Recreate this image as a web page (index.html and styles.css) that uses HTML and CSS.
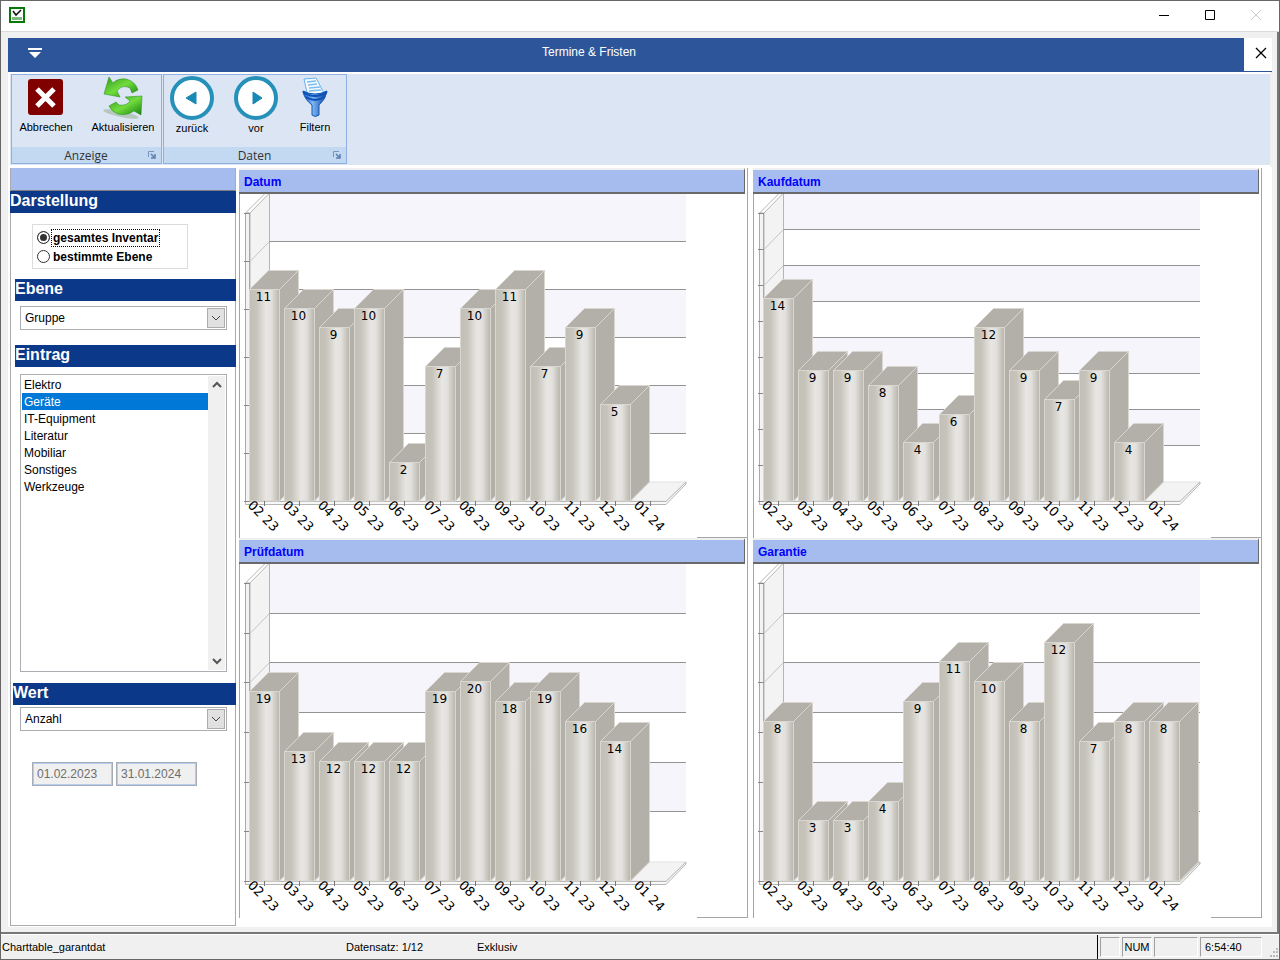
FILE: index.html
```html
<!DOCTYPE html>
<html lang="de">

<head>
    <meta charset="UTF-8">
    <meta name="viewport" content="width=device-width, initial-scale=1.0">
    <title>Termine &amp; Fristen</title>
    <link rel="stylesheet" href="styles.css">
</head>

<body>
    <div class="window">
        <!-- Window title bar -->
        <header class="titlebar">
            <svg class="app-icon" width="16" height="16" viewBox="0 0 16 16">
                <rect x="1" y="1" width="14" height="14" fill="#fff" stroke="#067a06" stroke-width="2" />
                <path d="M4 4l3 4 5-5" fill="none" stroke="#111" stroke-width="1.5" />
                <path d="M3 11.5h10" stroke="#7dbb7d" stroke-width="3" />
            </svg>
            <div class="window-buttons">
                <button aria-label="Minimieren"><svg width="12" height="12"><path d="M1 6.5h10" stroke="#000" /></svg></button>
                <button aria-label="Maximieren"><svg width="12" height="12"><path d="M1.500 1.500h9v9h-9z" fill="none" stroke="#000" /></svg></button>
                <button aria-label="Schließen" disabled><svg width="12" height="12"><path d="M1 1l10 10M11 1L1 11" stroke="#ccc" /></svg></button>
            </div>
        </header>

        <div class="frame">
            <!-- Blue form header -->
            <div class="form-header">
                <button class="menu-button" aria-label="Menü">
                    <svg width="14" height="10"><path d="M0 0h14v2H0zM1 4h12L7 10z" fill="#fff" /></svg>
                </button>
                <h1>Termine &amp; Fristen</h1>
                <button class="close-button" aria-label="Formular schließen">
                    <svg width="12" height="12"><path d="M1 1l10 10M11 1L1 11" stroke="#000" stroke-width="1.3" /></svg>
                </button>
            </div>

            <!-- Ribbon -->
            <div class="ribbon">
                <div class="ribbon-group">
                    <div class="ribbon-items view-items">
                        <button class="cancel">
                            <svg width="44" height="44" viewBox="0 0 44 44">
                                <rect x="4" y="4" width="35" height="36" rx="3" fill="#800000" />
                                <path d="M13 14l17 17M30 14L13 31" stroke="#fff" stroke-width="5" />
                            </svg>
                            Abbrechen
                        </button>
                        <button class="refresh">
                            <svg width="44" height="44" viewBox="0 0 44 44">
                                <defs>
                                    <linearGradient id="green" x1="0" y1="0" x2="1" y2="1">
                                        <stop offset="0" stop-color="#2f9a1c" />
                                        <stop offset="0.5" stop-color="#72dc3c" />
                                        <stop offset="1" stop-color="#128010" />
                                    </linearGradient>
                                </defs>
                                <ellipse cx="20" cy="39" rx="18" ry="3" fill="#b5c8bd" transform="rotate(12 20 39)" />
                                <path d="M8 2L3 19L19 22L16 16Q21 9 29 13L31 18L37 15Q34 6 25 4Q17 3 12 8Z" fill="url(#green)" stroke="#218a18" stroke-width="0.5" />
                                <path d="M41 21L24 22L29 26Q26 31 18 30L15 27L8 31Q10 36 17 39Q26 41 33 36L40 40Z" fill="url(#green)" stroke="#218a18" stroke-width="0.5" />
                            </svg>
                            Aktualisieren
                        </button>
                    </div>
                    <div class="ribbon-label">
                        <span>Anzeige</span>
                        <svg width="8" height="8"><path d="M0.500 6V0.500H6" fill="none" stroke="#7795bd" /><path d="M3 3l3 3M7 3v4H3" fill="none" stroke="#5c7fae" stroke-width="1.5" /></svg>
                    </div>
                </div>
                <div class="ribbon-group">
                    <div class="ribbon-items data-items">
                        <button class="nav">
                            <svg width="44" height="44" viewBox="0 0 44 44">
                                <circle cx="22" cy="22" r="20" fill="#fff" stroke="#2590b8" stroke-width="4" />
                                <path d="M16 22L26 16V28Z" fill="#1889b5" stroke="#1889b5" stroke-linejoin="round" />
                            </svg>
                            zurück
                        </button>
                        <button class="nav">
                            <svg width="44" height="44" viewBox="0 0 44 44">
                                <circle cx="22" cy="22" r="20" fill="#fff" stroke="#2590b8" stroke-width="4" />
                                <path d="M28 22L19 16V28Z" fill="#1889b5" stroke="#1889b5" stroke-linejoin="round" />
                            </svg>
                            vor
                        </button>
                        <button class="filter">
                            <svg width="44" height="44" viewBox="0 0 44 44">
                                <defs>
                                    <linearGradient id="blue">
                                        <stop offset="0" stop-color="#1050b8" />
                                        <stop offset="0.4" stop-color="#7db8f2" />
                                        <stop offset="1" stop-color="#073a9a" />
                                    </linearGradient>
                                </defs>
                                <path d="M11 4L23 3L32 20L15 22Z" fill="#f4faff" stroke="#65b2ee" />
                                <path d="M14 7l9-1M15 10l9-1M16 13l11-1M16 16l12-1" stroke="#7cbdf0" stroke-width="1.5" />
                                <path d="M10 16Q22 22 34 16Q33 24 26 30V40Q22 43 19 40V30Q11 24 10 16Z" fill="url(#blue)" stroke="#1459b4" />
                                <path d="M10 17Q22 25 34 17M13 22Q22 28 31 22" fill="none" stroke="#0c51ba" stroke-width="2" />
                            </svg>
                            Filtern
                        </button>
                    </div>
                    <div class="ribbon-label">
                        <span>Daten</span>
                        <svg width="8" height="8"><path d="M0.500 6V0.500H6" fill="none" stroke="#7795bd" /><path d="M3 3l3 3M7 3v4H3" fill="none" stroke="#5c7fae" stroke-width="1.5" /></svg>
                    </div>
                </div>
            </div>

            <div class="content">
                <!-- Filter settings -->
                <aside class="sidebar">
                    <div class="sidebar-top"></div>
                    <h2>Darstellung</h2>
                    <div class="radio-box">
                        <label><input type="radio" name="scope" checked><span class="focused">gesamtes Inventar</span></label>
                        <label><input type="radio" name="scope"><span>bestimmte Ebene</span></label>
                    </div>

                    <h2 class="inset" id="level-label">Ebene</h2>
                    <div class="dropdown">
                        <select aria-labelledby="level-label">
                            <option>Gruppe</option>
                        </select>
                        <svg width="18" height="20"><rect x="0.500" y="0.500" width="17" height="19" fill="#e1e1e1" stroke="#adadad" /><path d="M5 8l4 4 4-4" fill="none" stroke="#444" /></svg>
                    </div>

                    <h2 class="inset entry-title" id="entry-label">Eintrag</h2>
                    <div class="listbox">
                        <select size="7" aria-labelledby="entry-label">
                            <option>Elektro</option>
                            <option selected>Geräte</option>
                            <option>IT-Equipment</option>
                            <option>Literatur</option>
                            <option>Mobiliar</option>
                            <option>Sonstiges</option>
                            <option>Werkzeuge</option>
                        </select>
                        <div class="scrollbar">
                            <svg width="10" height="8"><path d="M1 6l4-4 4 4" fill="none" stroke="#555" stroke-width="2" /></svg>
                            <svg width="10" height="8"><path d="M1 2l4 4 4-4" fill="none" stroke="#555" stroke-width="2" /></svg>
                        </div>
                    </div>

                    <h2 class="value-title" id="value-label">Wert</h2>
                    <div class="dropdown value-dropdown">
                        <select aria-labelledby="value-label">
                            <option>Anzahl</option>
                        </select>
                        <svg width="18" height="20"><rect x="0.500" y="0.500" width="17" height="19" fill="#e1e1e1" stroke="#adadad" /><path d="M5 8l4 4 4-4" fill="none" stroke="#444" /></svg>
                    </div>

                    <div class="dates">
                        <input type="text" value="01.02.2023" aria-label="Von" disabled>
                        <input type="text" value="31.01.2024" aria-label="Bis" disabled>
                    </div>
                </aside>

                <!-- Charts are filled in by charts.js -->
                <main class="panels">
                    <section class="panel">
                        <h3>Datum</h3>
                        <div class="chart" id="chart-datum"></div>
                    </section>
                    <section class="panel">
                        <h3>Kaufdatum</h3>
                        <div class="chart" id="chart-kaufdatum"></div>
                    </section>
                    <section class="panel">
                        <h3>Prüfdatum</h3>
                        <div class="chart" id="chart-pruefdatum"></div>
                    </section>
                    <section class="panel">
                        <h3>Garantie</h3>
                        <div class="chart" id="chart-garantie"></div>
                    </section>
                </main>
            </div>
        </div>

        <!-- Status bar -->
        <footer class="statusbar">
            <span class="status-table">Charttable_garantdat</span>
            <span class="status-record">Datensatz: 1/12</span>
            <span class="status-mode">Exklusiv</span>
            <div class="status-cells">
                <span class="cell cell-caps"></span>
                <span class="cell cell-num">NUM</span>
                <span class="cell cell-insert"></span>
                <span class="cell cell-time">6:54:40</span>
                <svg class="grip" width="10" height="10"><path d="M7 0h2v2H7zM4 3h2v2H4zM7 3h2v2H7zM1 7h2v2H1zM4 7h2v2H4zM7 7h2v2H7z" fill="#bbb" /></svg>
            </div>
        </footer>
    </div>

    <script src="charts.js"></script>
</body>

</html>
```

FILE: styles.css
```css
* {
    box-sizing: border-box;
}

body {
    margin: 0;
    font-family: "Liberation Sans", Arial, sans-serif;
    font-size: 12px;
    color: #000;
    background-color: #f0f0f0;
}

button {
    padding: 0;
    border: none;
    background: none;
    font-family: inherit;
    color: #000;
}

h1,
h2,
h3 {
    margin: 0;
}

svg {
    display: block;
}

.window {
    display: flex;
    flex-direction: column;
    min-height: 100vh;
    border: 1px solid #666;
}

/* Title bar */
.titlebar {
    display: flex;
    justify-content: space-between;
    align-items: center;
    height: 31px;
    padding: 0 17px 2px 8px;
    background-color: #fff;
    border-bottom: 1px solid #dcdcdc;
}

.window-buttons {
    display: flex;
    gap: 34px;
}

.window-buttons button {
    width: 12px;
    height: 12px;
}

.frame {
    flex: 1;
    display: flex;
    flex-direction: column;
    padding: 6px 5px 5px 7px;
    border-right: 2px solid #777;
    border-bottom: 2px solid #777;
}

/* Blue header of the form */
.form-header {
    display: flex;
    align-items: center;
    height: 34px;
    background-color: #2d569a;
}

.menu-button {
    width: 54px;
    padding: 0 20px 4px;
}

.form-header h1 {
    flex: 1;
    padding: 0 128px 6px 0;
    text-align: center;
    font-size: 12px;
    font-weight: normal;
    color: #fff;
}

.close-button {
    display: flex;
    justify-content: center;
    align-items: center;
    width: 28px;
    height: 33px;
    margin-bottom: 1px;
    padding: 0 0 3px 6px;
    background-color: #fff;
}

/* Ribbon */
.ribbon {
    display: flex;
    gap: 1px;
    height: 95px;
    padding-left: 1px;
    margin-right: 2px;
    background-color: #dbe5f4;
    border: 2px solid #fff;
    border-right: none;
}

.ribbon-group {
    display: flex;
    flex-direction: column;
    justify-content: space-between;
    height: 90px;
    border: 1px solid #8fb0e2;
}

.ribbon-items {
    display: flex;
}

.ribbon-items button {
    display: flex;
    flex-direction: column;
    align-items: center;
    padding-top: 1px;
    font-size: 11px;
    line-height: 16px;
}

.ribbon-items .cancel,
.ribbon-items .refresh,
.ribbon-items .filter {
    padding-top: 0;
}

.view-items {
    gap: 5px;
}

.data-items {
    gap: 8px;
    padding-right: 8px;
}

.ribbon-items .cancel {
    width: 68px;
}

.ribbon-items .refresh {
    width: 76px;
}

.ribbon-items .nav {
    width: 56px;
}

.ribbon-items .filter {
    width: 46px;
}

.ribbon-label {
    display: flex;
    align-items: center;
    height: 16px;
    padding: 0 5px 0 12px;
    font-family: "Open Sans", "Noto Sans", sans-serif;
    font-size: 12px;
    color: #333;
    background-color: #c3d9f1;
}

.ribbon-label span {
    flex: 1;
    text-align: center;
}

/* Main area */
.content {
    flex: 1;
    display: flex;
    gap: 3px;
    padding: 1px 10px 1px 2px;
    background-color: #fff;
}

.sidebar {
    width: 226px;
    border: 1px solid #a9abb0;
    border-top: none;
}

.sidebar-top {
    height: 23px;
    background-color: #a6bcee;
    border-bottom: 1px solid #7d7d7d;
}

.sidebar h2 {
    height: 22px;
    margin-right: -1px;
    margin-left: -1px;
    font-size: 16px;
    line-height: 19px;
    color: #fff;
    background-color: #0c3889;
}

.sidebar h2.inset {
    margin-left: 4px;
}

.sidebar h2.value-title {
    margin-left: 2px;
}

.radio-box {
    width: 156px;
    height: 45px;
    margin: 11px 0 10px 21px;
    padding: 3px 4px 0;
    border: 1px solid #dcdcdc;
}

.radio-box label {
    display: flex;
    align-items: center;
    height: 19px;
    font-weight: bold;
}

.radio-box input {
    appearance: none;
    width: 13px;
    height: 13px;
    margin: 0 3px 0 0;
    border: 1px solid #333;
    border-radius: 50%;
    background-color: #fff;
}

.radio-box input:checked {
    background-color: #333;
    box-shadow: inset 0 0 0 2px #fff;
}

.radio-box .focused {
    outline: 1px dotted #000;
    outline-offset: 1px;
}

.dropdown {
    display: flex;
    align-items: center;
    width: 207px;
    height: 24px;
    margin: 5px 0 0 9px;
    padding-right: 1px;
    border: 1px solid #abadb3;
}

.value-dropdown {
    margin-top: 2px;
}

select {
    appearance: none;
    flex: 1;
    padding: 0 0 0 4px;
    border: none;
    outline: none;
    font-family: inherit;
    font-size: 12px;
    color: #000;
    background-color: #fff;
}

.entry-title {
    margin-top: 15px;
}

.listbox {
    display: flex;
    width: 207px;
    height: 298px;
    margin: 7px 0 11px 9px;
    padding: 1px;
    border: 1px solid #abadb3;
}

.listbox select {
    height: 100%;
    padding: 0;
    overflow: hidden;
}

.listbox option {
    height: 17px;
    min-height: 17px;
    padding: 2px 2px 0;
    line-height: 15px;
}

.listbox option:checked {
    color: #fff;
    background: #0078d7 linear-gradient(#0078d7, #0078d7);
    -webkit-text-fill-color: #fff;
}

.scrollbar {
    display: flex;
    flex-direction: column;
    justify-content: space-between;
    align-items: center;
    width: 17px;
    padding: 5px 0;
    background-color: #f0f0f0;
}

.dates {
    display: flex;
    gap: 3px;
    margin: 31px 0 0 21px;
}

.dates input {
    width: 81px;
    height: 24px;
    padding: 0 4px;
    border: 1px solid #a7abb3;
    box-shadow: inset 0 0 0 1px #b4cdf0;
    font-family: inherit;
    font-size: 12px;
    color: #6d6d6d;
    background-color: #f0f0f0;
}

/* Chart panels */
.panels {
    flex: 1;
    display: grid;
    grid-template-columns: 1fr 1fr;
    column-gap: 5px;
    align-content: start;
}

.panel {
    border-right: 1px solid #a5a5a5;
}

.panel h3 {
    height: 26px;
    margin-right: 2px;
    padding-left: 5px;
    font-size: 12px;
    line-height: 24px;
    color: #00f;
    background-color: #a6bcee;
    border-top: 2px solid #f0f0f0;
    border-right: 1px solid #696969;
    border-bottom: 2px solid #696969;
}

.chart {
    border-left: 1px solid #a5a5a5;
    background: linear-gradient(#a5a5a5, #a5a5a5) right bottom / 50px 1px no-repeat;
}

.chart text {
    font-family: "DejaVu Sans", Verdana, sans-serif;
    font-size: 12px;
    fill: #000;
}

.chart .month {
    font-size: 13px;
}

/* Status bar */
.statusbar {
    display: flex;
    align-items: center;
    height: 25px;
    padding-left: 1px;
    font-size: 11px;
    background-color: #f0f0f0;
    border-top: 1px solid #fff;
}

.status-table {
    width: 344px;
}

.status-record {
    width: 131px;
}

.status-mode {
    flex: 1;
}

.status-cells {
    display: flex;
    align-items: center;
    gap: 2px;
    height: 24px;
    padding: 0 0 0 2px;
    border-left: 1px solid #000;
}

.cell {
    height: 20px;
    line-height: 19px;
    border: 1px solid #a0a0a0;
    border-right-color: #fff;
    border-bottom-color: #fff;
}

.cell-caps {
    width: 20px;
}

.cell-num {
    width: 30px;
    text-align: center;
}

.cell-insert {
    width: 44px;
}

.cell-time {
    width: 62px;
    padding-left: 4px;
}

.grip {
    align-self: flex-end;
    margin: 0 0 1px 5px;
}
```

FILE: charts.js
```javascript
const months = ['02 23', '03 23', '04 23', '05 23', '06 23', '07 23', '08 23', '09 23', '10 23', '11 23', '12 23', '01 24'];

// Chart geometry
const LEFT = 10;      // front left corner of the floor
const TOP = 19;       // upper end of the value axis
const DEPTH = 20;     // offset of the back wall
const BAR = 30;
const WIDTH = 416;
const STEP = 35.1;

function line(x1, y1, x2, y2, color) {
    return `<line x1="${x1}" y1="${y1}" x2="${x2}" y2="${y2}" stroke="${color}"/>`;
}

function shape(points, fill, stroke) {
    return `<polygon points="${points}" fill="${fill}" stroke="${stroke}"/>`;
}

function drawChart(id, values, max, steps, plotHeight) {
    const base = TOP + plotHeight;
    const back = LEFT + DEPTH - 0.5;
    const right = LEFT + DEPTH + WIDTH;
    let svg = '';

    // Back wall with alternating bands
    for (let i = 0; i < steps; i++) {
        const y = Math.round(TOP + plotHeight * i / steps);
        const next = Math.round(TOP + plotHeight * (i + 1) / steps);
        const wallY = y - DEPTH;
        if (i % 2 === 0) {
            svg += `<rect x="${back}" y="${wallY}" width="${right - back}" height="${next - y}" fill="#f5f5fb"/>`;
        }
    }

    // Left wall and floor
    svg += shape(`${LEFT},${TOP} ${back},${TOP - DEPTH} ${back},${base - DEPTH} ${LEFT},${base}`, '#f3f3f3', '#b5b5b5');
    svg += shape(`5.5,${TOP} ${LEFT - 0.5},${TOP} ${LEFT - 0.5},${base} 5.5,${base + 3}`, '#f3f3f3', '#aaa');
    svg += line(5.5, TOP, 25.5, TOP - DEPTH, '#b5b5b5');
    svg += shape(`${LEFT},${base} ${back},${base - DEPTH} ${right},${base - DEPTH + 1} ${right - DEPTH},${base}`, '#f3f3f3', '#e3e3e3');
    svg += shape(`5.5,${base + 0.5} ${right - DEPTH},${base + 0.5} ${right},${base - DEPTH + 1} ${right},${base - DEPTH + 3} ${right - DEPTH},${base + 3.5} 5.5,${base + 3.5}`, '#f8f8f8', '#b5b5b5');

    for (let i = 0; i <= steps; i++) {
        const y = Math.round(TOP + plotHeight * i / steps) + 0.5;
        svg += line(4, y, LEFT, y, '#888');
        if (i > 0 && i < steps) {
            svg += line(LEFT, y, back, y - DEPTH, '#c5c5c5');
            svg += line(back, y - DEPTH, right, y - DEPTH, '#939393');
        }
    }

    // Bars, from left to right so that each one covers its neighbour's side
    values.forEach((value, i) => {
        if (value === 0) {
            return;
        }
        const x = Math.round(LEFT + i * STEP) - 0.5;
        const y = Math.round(base - plotHeight * value / max) - 0.5;
        const r = x + BAR;
        const d = DEPTH - 1;
        svg += shape(`${x},${y} ${x + d},${y - d} ${r + d},${y - d} ${r},${y}`, '#b3b0a9', '#d9d7d0');
        svg += shape(`${r},${y} ${r + d},${y - d} ${r + d},${base - d} ${r},${base}`, '#b3b0a9', '#d9d7d0');
        svg += shape(`${x},${y} ${r},${y} ${r},${base} ${x},${base}`, 'url(#bar)', '#d9d7d0');
        svg += `<text x="${x + 14}" y="${y + 11}" text-anchor="middle">${value}</text>`;
    });

    // Month labels
    months.forEach((month, i) => {
        const x = Math.round(LEFT + i * STEP);
        svg += line(x + 14.5, base, x + 14.5, base + 5, '#777');
        svg += `<text class="month" transform="translate(${x - 3} ${base + 5}) rotate(45)">${month}</text>`;
    });

    document.getElementById(id).innerHTML = `
        <svg width="458" height="${base + 37}">
            <defs>
                <linearGradient id="bar">
                    <stop offset="0" stop-color="#c2bfb6"/>
                    <stop offset="0.22" stop-color="#c6c3bb"/>
                    <stop offset="0.55" stop-color="#e8e6e2"/>
                    <stop offset="0.72" stop-color="#e3e1dd"/>
                    <stop offset="1" stop-color="#b7b4ab"/>
                </linearGradient>
            </defs>
            ${svg}
        </svg>
    `;
}

drawChart('chart-datum', [11, 10, 9, 10, 2, 7, 10, 11, 7, 9, 5, 0], 15, 6, 288);
drawChart('chart-kaufdatum', [14, 9, 9, 8, 4, 6, 12, 9, 7, 9, 4, 0], 20, 8, 288);
drawChart('chart-pruefdatum', [19, 13, 12, 12, 12, 19, 20, 18, 19, 16, 14, 0], 30, 6, 298);
drawChart('chart-garantie', [8, 3, 3, 4, 9, 11, 10, 8, 12, 7, 8, 8], 15, 6, 298);
```
